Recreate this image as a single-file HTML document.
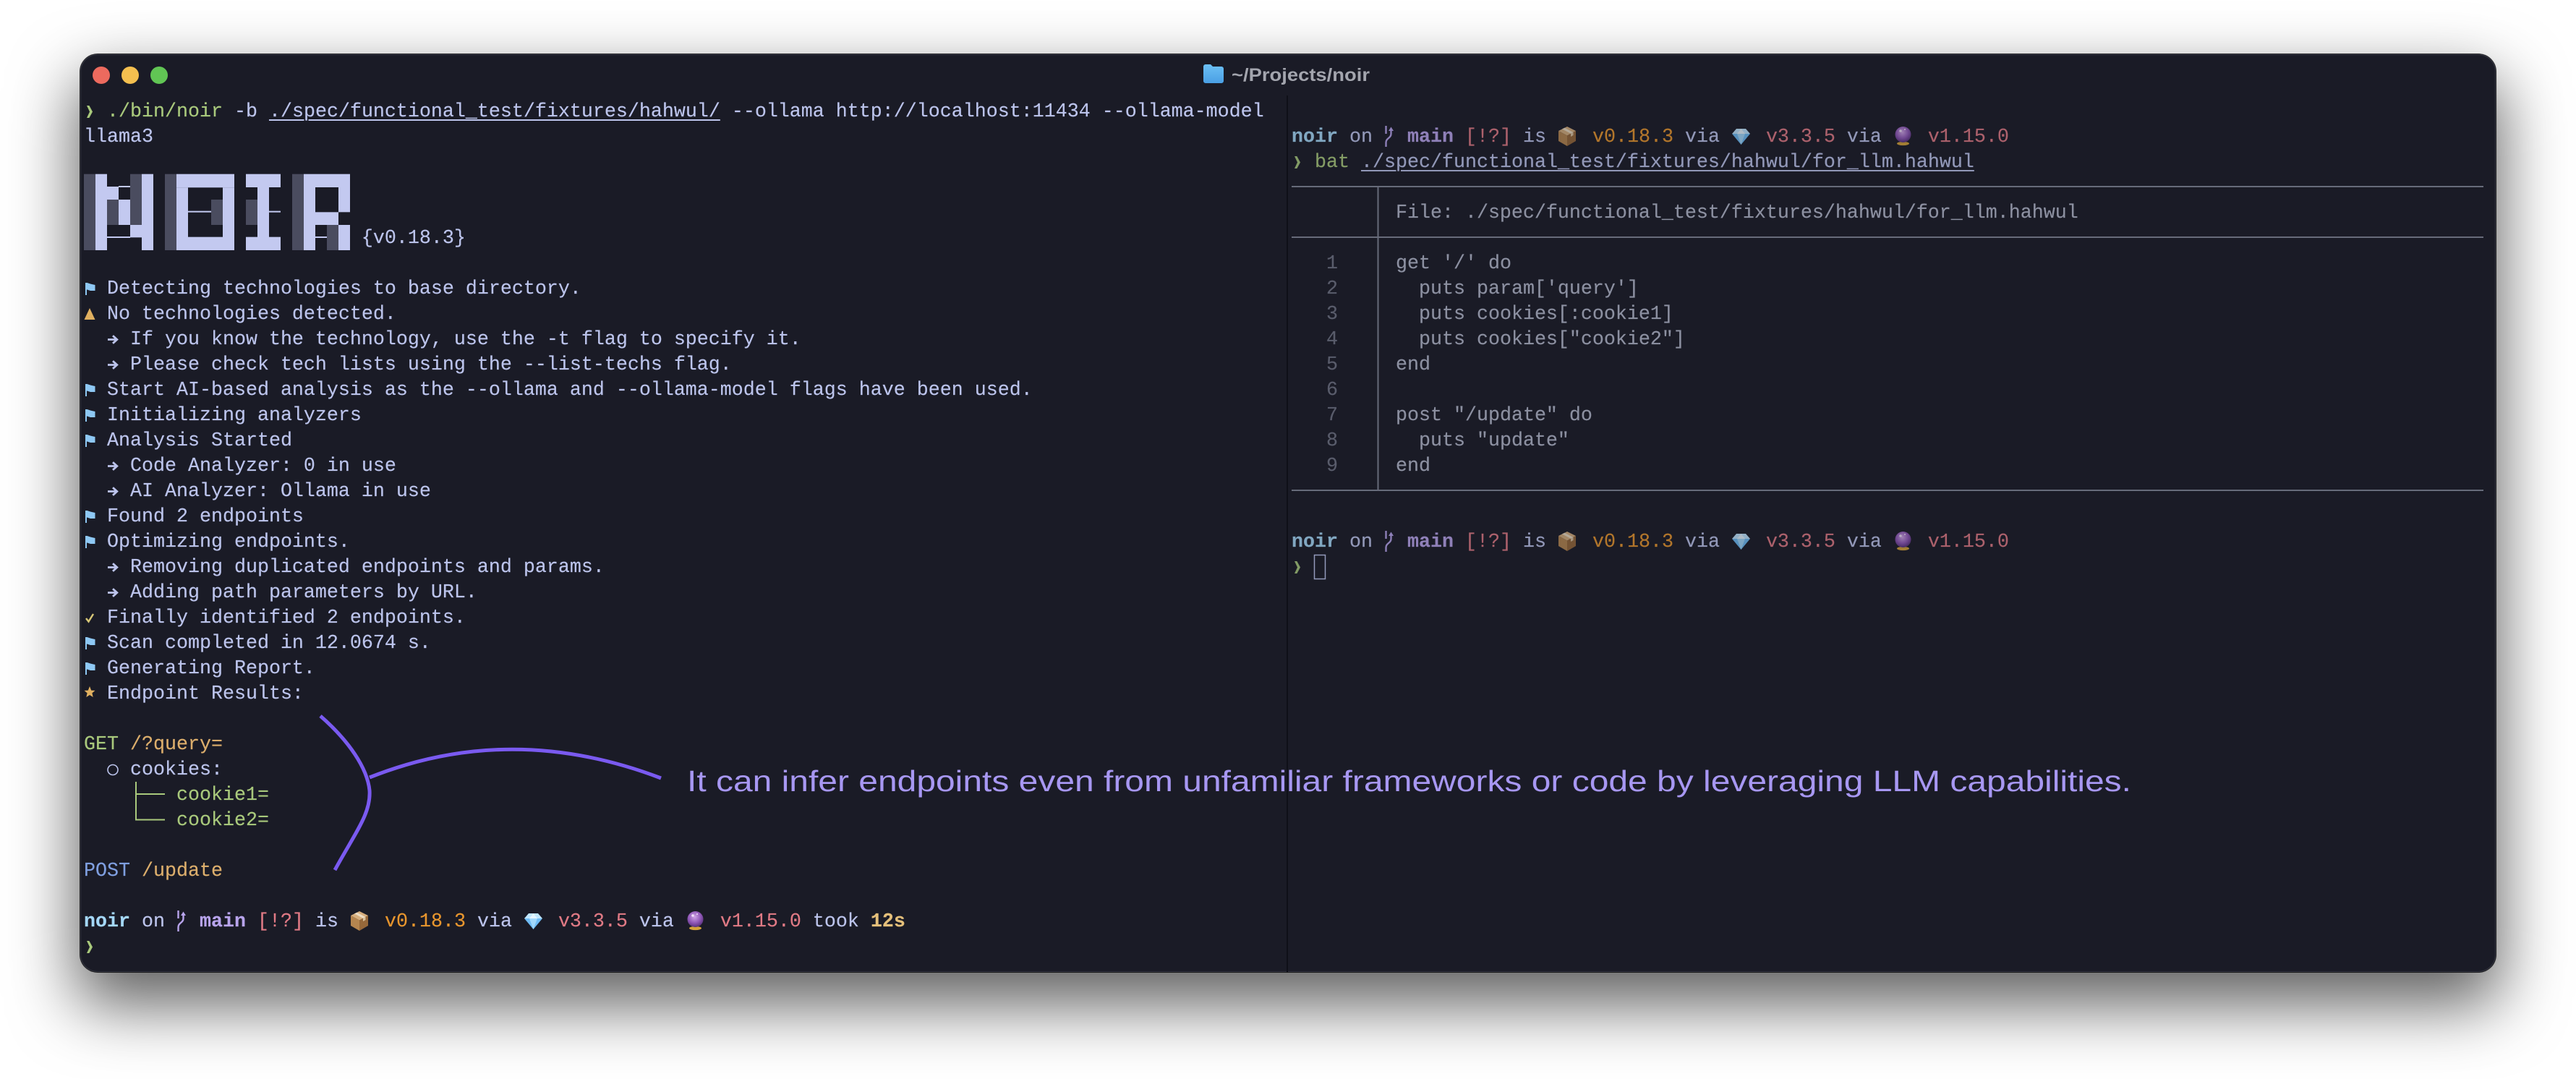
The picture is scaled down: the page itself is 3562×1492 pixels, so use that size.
<!DOCTYPE html>
<html><head><meta charset="utf-8"><title>noir</title>
<style>
html,body{margin:0;padding:0;width:3562px;height:1492px;background:#fff;overflow:hidden}
#win{position:absolute;left:111px;top:75px;width:3340px;height:1269px;background:#1a1b26;border-radius:24px;box-shadow:0 40px 90px 6px rgba(0,0,0,.62),0 0 0 1px rgba(10,10,14,.85)}
#win:after{content:"";position:absolute;inset:0;border-radius:24px;box-shadow:inset 0 0 0 1px rgba(120,122,135,.28)}
pre{position:absolute;margin:0;font:26.67px/35px "Liberation Mono","DejaVu Sans Mono",monospace;color:#bcc4ec;-webkit-text-stroke:.15px currentColor;font-variant-ligatures:none}
.g{color:#a9c97c}.t{color:#dcae6c}.b{color:#7f9fe0}.n{color:#a5d8f8;font-weight:bold}.m{color:#b8a4ec;font-weight:bold}.r{color:#e07a85}.o{color:#e8962e}.y{color:#e5c07b;font-weight:bold}
u{text-decoration:underline;text-decoration-thickness:2px;text-underline-offset:4px}
.c{color:#b4b9cc}.ln{color:#6f7384}
svg{position:absolute;left:0;top:0}
</style></head><body>
<div id="win"></div>

<pre style="left:116px;top:138px">  <span class="g">./bin/noir</span> -b <u>./spec/functional_test/fixtures/hahwul/</u> --ollama http://localhost:11434 --ollama-model
llama3


                        
                        {v0.18.3}

  Detecting technologies to base directory.
  No technologies detected.
    If you know the technology, use the -t flag to specify it.
    Please check tech lists using the --list-techs flag.
  Start AI-based analysis as the --ollama and --ollama-model flags have been used.
  Initializing analyzers
  Analysis Started
    Code Analyzer: 0 in use
    AI Analyzer: Ollama in use
  Found 2 endpoints
  Optimizing endpoints.
    Removing duplicated endpoints and params.
    Adding path parameters by URL.
  Finally identified 2 endpoints.
  Scan completed in 12.0674 s.
  Generating Report.
  Endpoint Results:

<span class="g">GET</span> <span class="t">/?query=</span>
    cookies:
        <span class="g">cookie1=</span>
        <span class="g">cookie2=</span>

<span class="b">POST</span> <span class="t">/update</span>

<span class="n">noir</span> on   <span class="m">main</span> <span class="r">[!?]</span> is    <span class="o">v0.18.3</span> via    <span class="r">v3.3.5</span> via    <span class="r">v1.15.0</span> took <span class="y">12s</span></pre>

<pre style="left:1786px;top:138px;opacity:.74">

<span class="n">noir</span> on   <span class="m">main</span> <span class="r">[!?]</span> is    <span class="o">v0.18.3</span> via    <span class="r">v3.3.5</span> via    <span class="r">v1.15.0</span>
  <span class="g">bat</span> <u>./spec/functional_test/fixtures/hahwul/for_llm.hahwul</u>

<span class="c">         File: ./spec/functional_test/fixtures/hahwul/for_llm.hahwul</span>

<span class="ln">   1</span>     <span class="c">get '/' do</span>
<span class="ln">   2</span>     <span class="c">  puts param['query']</span>
<span class="ln">   3</span>     <span class="c">  puts cookies[:cookie1]</span>
<span class="ln">   4</span>     <span class="c">  puts cookies["cookie2"]</span>
<span class="ln">   5</span>     <span class="c">end</span>
<span class="ln">   6</span>
<span class="ln">   7</span>     <span class="c">post "/update" do</span>
<span class="ln">   8</span>     <span class="c">  puts "update"</span>
<span class="ln">   9</span>     <span class="c">end</span>


<span class="n">noir</span> on   <span class="m">main</span> <span class="r">[!?]</span> is    <span class="o">v0.18.3</span> via    <span class="r">v3.3.5</span> via    <span class="r">v1.15.0</span></pre>

<svg width="3562" height="1492" viewBox="0 0 3562 1492" xmlns="http://www.w3.org/2000/svg">
<defs>
<linearGradient id="fold" x1="0" y1="0" x2="0" y2="1"><stop offset="0" stop-color="#6cc0f5"/><stop offset="1" stop-color="#4a9fe4"/></linearGradient>
<radialGradient id="ball" cx=".45" cy=".35" r=".7"><stop offset="0" stop-color="#d0a4e6"/><stop offset=".55" stop-color="#9058b8"/><stop offset="1" stop-color="#4e2a70"/></radialGradient>
<path id="fl" d="M2 10H4.5L9 11.5 15.5 13V21H9L4.5 19.5H4V27H2Z" fill="#8ec8f4"/>
<path id="ar" d="M1 18.5H13M8 13.2L13.8 18.5 8 23.8" fill="none" stroke="#bcc4ec" stroke-width="2.8"/>
<path id="ch" d="M4 10H7.4L12 18.5 7.4 27H4L8 18.5Z" fill="#a9c97c"/>
<g id="pr">
  <g transform="translate(129,3)">
    <path d="M1.5 0V11" fill="none" stroke="#b8a4ec" stroke-width="2.4"/>
    <path d="M8.5 5V11C8.5 17 1.5 17 1.5 23V29" fill="none" stroke="#b8a4ec" stroke-width="2.4"/>
    <path d="M5 7L8.5 1.5 12 7Z" fill="#b8a4ec"/>
  </g>
  <g transform="translate(369,4)">
    <polygon points="12,0 24,6 12,12.5 0,6" fill="#d6ae7d"/>
    <polygon points="0,6 12,12.5 12,27 0,20" fill="#b5854f"/>
    <polygon points="24,6 12,12.5 12,27 24,20" fill="#96683a"/>
    <polygon points="5,3.4 8.5,1.8 20.5,8 17,9.8" fill="#ecdcc3"/>
    <polygon points="17,9.8 20.5,8 20.5,12 17,14" fill="#d9c3a0"/>
  </g>
  <g transform="translate(609,7)">
    <polygon points="6,0 19,0 25,7 0,7" fill="#bfe6ff"/>
    <polygon points="0,7 25,7 12.5,22" fill="#6fbcf5"/>
    <polygon points="7,7 18,7 12.5,22" fill="#a2d8fb"/>
    <polygon points="12.5,0 7,7 18,7" fill="#e4f5ff"/>
  </g>
  <g transform="translate(834,4)">
    <ellipse cx="11.5" cy="23.5" rx="8.5" ry="2.6" fill="#d4a23a"/>
    <circle cx="11.5" cy="11" r="11" fill="url(#ball)"/>
    <circle cx="8" cy="6" r="1.8" fill="#f1dff8"/>
    <circle cx="14" cy="4" r="1" fill="#f1dff8"/>
  </g>
</g>
</defs>

<!-- traffic lights -->
<circle cx="140" cy="104" r="12" fill="#ec6a5e"/>
<circle cx="180" cy="104" r="12" fill="#f4bf4f"/>
<circle cx="220" cy="104" r="12" fill="#61c554"/>

<!-- title -->
<path d="M1664 92a3 3 0 0 1 3-3h7l3 3h12a3 3 0 0 1 3 3v17a3 3 0 0 1-3 3h-22a3 3 0 0 1-3-3Z" fill="url(#fold)"/>
<text x="1703" y="112" font-family="Liberation Sans, sans-serif" font-weight="bold" font-size="25" fill="#a3a5ae" textLength="191" lengthAdjust="spacingAndGlyphs">~/Projects/noir</text>

<!-- divider -->
<rect x="1779" y="132" width="2" height="1212" fill="#0f1018"/>

<!-- block art -->
<g transform="translate(100,220) scale(.33333)">
<g fill="#4a4c5f">
<rect x="48" y="62" width="48" height="316"/><rect x="144" y="168" width="48" height="105"/><rect x="240" y="62" width="48" height="211"/>
<rect x="384" y="62" width="48" height="316"/><rect x="576" y="168" width="48" height="105"/>
<rect x="720" y="168" width="48" height="105"/>
<rect x="912" y="62" width="48" height="316"/><rect x="1056" y="273" width="48" height="105"/>
</g>
<g fill="#c3c9f0">
<rect x="96" y="62" width="48" height="316"/><rect x="144" y="114" width="48" height="54"/><rect x="192" y="168" width="48" height="105"/><rect x="192" y="111" width="48" height="6"/><rect x="288" y="62" width="48" height="316"/><rect x="240" y="273" width="48" height="52"/><rect x="144" y="321" width="96" height="6"/>
<rect x="432" y="62" width="240" height="56"/><rect x="432" y="118" width="48" height="260"/><rect x="624" y="118" width="48" height="260"/><rect x="480" y="323" width="144" height="55"/><rect x="480" y="215" width="96" height="6"/>
<rect x="720" y="62" width="144" height="55"/><rect x="768" y="117" width="48" height="261"/><rect x="720" y="323" width="144" height="55"/><rect x="816" y="215" width="48" height="6"/>
<rect x="960" y="62" width="192" height="55"/><rect x="960" y="117" width="48" height="261"/><rect x="1104" y="117" width="48" height="103"/><rect x="1008" y="220" width="96" height="53"/><rect x="1104" y="273" width="48" height="105"/><rect x="1008" y="321" width="48" height="6"/>
</g>
</g>

<!-- left pane icons -->
<use href="#ch" x="116" y="136"/>
<use href="#fl" x="116" y="381"/><use href="#fl" x="116" y="521"/><use href="#fl" x="116" y="556"/><use href="#fl" x="116" y="591"/><use href="#fl" x="116" y="696"/><use href="#fl" x="116" y="731"/><use href="#fl" x="116" y="871"/><use href="#fl" x="116" y="906"/>
<polygon points="124,426 131.5,442 116.5,442" fill="#e0b060"/>
<use href="#ar" x="148" y="451"/><use href="#ar" x="148" y="486"/><use href="#ar" x="148" y="626"/><use href="#ar" x="148" y="661"/><use href="#ar" x="148" y="766"/><use href="#ar" x="148" y="801"/>
<path d="M119 855L122.5 859.5 129 849" fill="none" stroke="#d8c878" stroke-width="2.4"/>
<polygon points="124,949 126.2,954.6 131.5,954.9 127.4,958.4 128.7,964 124,961 119.3,964 120.6,958.4 116.5,954.9 121.8,954.6" fill="#e0b060"/>
<ellipse cx="156" cy="1064.5" rx="7" ry="7" fill="none" stroke="#bcc4ec" stroke-width="1.6"/>
<path d="M188 1081V1133.5H228M188 1098H228" fill="none" stroke="#a9c97c" stroke-width="2"/>
<use href="#pr" x="116" y="1256"/>
<use href="#ch" x="116" y="1291"/>

<!-- right pane -->
<g opacity=".74">
<use href="#pr" x="1786" y="171"/>
<use href="#ch" x="1786" y="206"/>
<use href="#pr" x="1786" y="731"/>
<use href="#ch" x="1786" y="766"/>
<rect x="1817.5" y="767.5" width="15" height="33" fill="none" stroke="#c0c8f0" stroke-width="1.5"/>
</g>
<g fill="#676b7a">
<rect x="1786" y="257" width="1648" height="2"/>
<rect x="1786" y="327" width="1648" height="2"/>
<rect x="1786" y="677" width="1648" height="2"/>
<rect x="1904.5" y="257" width="2" height="420"/>
</g>

<!-- annotation -->
<g fill="none" stroke="#7a5af0" stroke-width="5">
<path d="M443 990C482 1024 508 1062 511 1093C513 1125 492 1150 463 1203"/>
<path d="M511 1075Q707 997 914 1076"/>
</g>
<text x="950" y="1094" font-family="Liberation Sans, sans-serif" font-size="41" fill="#a797f2" textLength="1997" lengthAdjust="spacingAndGlyphs">It can infer endpoints even from unfamiliar frameworks or code by leveraging LLM capabilities.</text>
</svg>
</body></html>
